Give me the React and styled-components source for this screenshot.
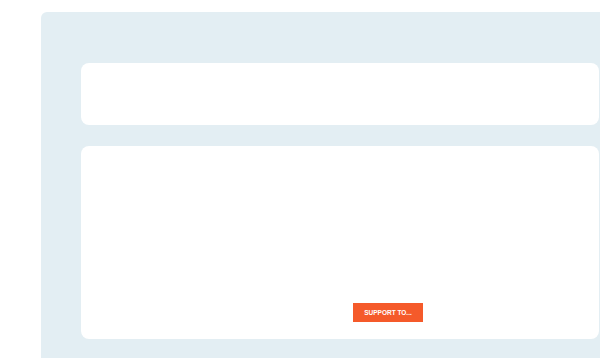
import React from 'react';
import styled, { createGlobalStyle } from 'styled-components';

const GlobalStyle = createGlobalStyle`
    html, body {
        margin: 0;
        padding: 0;
        background: #ffffff;
        overflow: hidden;
        font-family: "Liberation Sans", Arial, sans-serif;
    }
`;

const Page = styled.div`
    width: 600px;
    height: 358px;
    padding: 12px 0 0 41px;
    box-sizing: border-box;
    overflow: hidden;
`;

const Panel = styled.div`
    width: 600px;
    height: 400px;
    background: #e3eef3;
    border-radius: 6px 0 0 0;
    padding: 51px 0 0 40px;
    box-sizing: border-box;
    display: flex;
    flex-direction: column;
    gap: 21px;
`;

const Card = styled.div`
    width: 518px;
    height: ${props => props.$height}px;
    background: #ffffff;
    border-radius: 8px;
    box-sizing: border-box;
    display: flex;
    flex-direction: column;
    justify-content: flex-end;
    align-items: flex-start;
    padding: 0 0 17px 272px;
`;

const SupportButton = styled.button`
    width: 70px;
    height: 19px;
    border: none;
    border-radius: 0;
    background: #f55a2a;
    color: #ffffff;
    font-family: "Liberation Sans", Arial, sans-serif;
    font-size: 6.5px;
    font-weight: 700;
    letter-spacing: 0;
    padding: 0;
    cursor: pointer;
`;

function App() {
    return (
        <Page>
            <GlobalStyle />
            <Panel>
                <Card $height={62} />
                <Card $height={193}>
                    <SupportButton>SUPPORT TO...</SupportButton>
                </Card>
            </Panel>
        </Page>
    );
}

export default App;
